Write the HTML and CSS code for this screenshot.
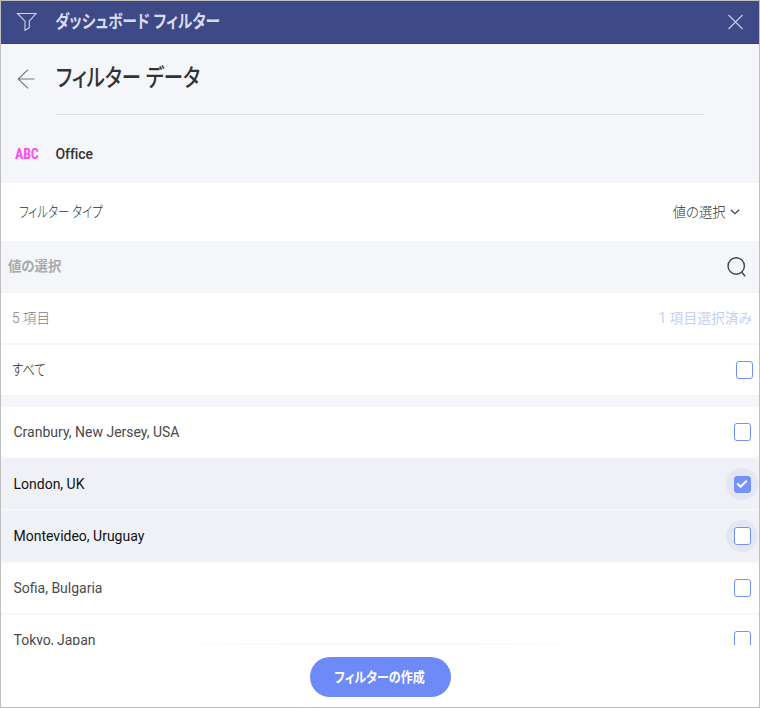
FILE: index.html
```html
<!DOCTYPE html>
<html lang="ja">
<head>
<meta charset="utf-8">
<title>ダッシュボード フィルター</title>
<link rel="stylesheet" href="styles.css">
</head>
<body>
<div class="dialog">
  <header class="titlebar">
    <svg class="funnel" width="22" height="22" viewBox="0 0 22 22"><path d="M1.5 2.5H20L13.3 10.2V16.8L9 19.3V10.2Z"/></svg>
    <span class="jp title">ダッシュボード フィルター</span>
    <svg class="close" width="16" height="16" viewBox="0 0 16 16"><path d="M1.5 1L15.5 15M15.5 1L1.5 15"/></svg>
  </header>
  <section class="intro">
    <div class="heading">
      <svg class="back" width="18" height="20" viewBox="0 0 18 20"><path d="M17.5 10H1M11 .7L1.2 10L11 19.3"/></svg>
      <h1><span class="jp h1text">フィルター データ</span></h1>
    </div>
    <div class="field"><span class="abc">ABC</span><span class="office">Office</span></div>
  </section>
  <div class="type-row">
    <span class="jp type-label">フィルター タイプ</span>
    <span class="jp type-value">値の選択</span>
    <svg class="chevron" width="10" height="6" viewBox="0 0 10 6"><path d="M.8 .8L5 4.7L9.2 .8"/></svg>
  </div>
  <div class="search-row">
    <span class="jp search-label">値の選択</span>
    <svg class="search" width="20" height="20" viewBox="0 0 20 20"><circle cx="9.2" cy="9" r="8.2"/><path d="M14.5 15L18.2 19.2"/></svg>
  </div>
  <div class="count-row">
    <span class="jp count">5 項目</span>
    <span class="jp selected">1 項目選択済み</span>
  </div>
  <div class="all-row"><span class="jp all">すべて</span><span class="box"></span></div>
  <ul class="list">
    <li><span>Cranbury, New Jersey, USA</span><span class="halo"><span class="box"></span></span></li>
    <li class="on"><span>London, UK</span><span class="halo"><span class="box checked"><svg width="12" height="10" viewBox="0 0 12 10"><path d="M1.2 4.5L4.6 7.8L10.8 1.6"/></svg></span></span></li>
    <li class="on"><span>Montevideo, Uruguay</span><span class="halo"><span class="box"></span></span></li>
    <li><span>Sofia, Bulgaria</span><span class="halo"><span class="box"></span></span></li>
    <li><span>Tokyo, Japan</span><span class="halo"><span class="box"></span></span></li>
  </ul>
  <footer><button><span class="jp create">フィルターの作成</span></button></footer>
</div>
</body>
</html>
```
FILE: styles.css
```css
* { box-sizing: border-box; }
body { margin: 0; font-family: Roboto, "Noto Sans CJK JP", sans-serif; font-size: 14px; color: #4a4a4c; }
svg { display: block; fill: none; flex: none; }
.dialog { width: 760px; height: 708px; border: 1px solid #bfbfbf; background: #f5f6fa; display: flex; flex-direction: column; overflow: hidden; }
.jp { display: inline-block; white-space: nowrap; font-feature-settings: "palt"; transform-origin: left center; }
.titlebar { height: 43px; flex: none; background: #3e4988; border-bottom: 1px solid #343e7a; display: flex; align-items: center; padding: 0 16px 0 15px; }
.funnel { stroke: #d4d6e6; stroke-width: 1.1; }
.title { margin-left: 17px; color: #d9dbe8; font-size: 18px; font-weight: 700; line-height: 40px; transform: scaleX(.818); }
.close { margin-left: auto; stroke: #c5c8dd; stroke-width: 1.2; }
.intro { height: 139px; flex: none; }
.heading { height: 71px; margin-right: 55px; display: flex; }
.back { margin: 25px 0 0 16px; stroke: #777; stroke-width: 1.1; }
h1 { margin: 0 0 0 21px; flex: 1; border-bottom: 1px solid #dcdde1; font-size: 24px; font-weight: 500; line-height: 69px; color: #333; }
.h1text { transform: scaleX(.808); }
.field { display: flex; align-items: center; height: 78px; padding-left: 14px; }
.abc { width: 40.5px; color: #ff4df0; font: 700 14px "Roboto Condensed", Roboto, sans-serif; letter-spacing: -.2px; }
.office { font-weight: 500; letter-spacing: -.1px; color: #333; }
.type-row { height: 58px; flex: none; background: #fff; display: flex; align-items: center; padding: 0 19px 0 18px; color: #303032; font-weight: 300; }
.type-label { font-size: 15px; transform: scaleX(.765); margin-top: -3px; }
.type-value { margin: -3px 0 0 auto; transform-origin: right center; transform: scaleX(.95); }
.chevron { margin-left: 5px; stroke: #444; stroke-width: 1.2; }
.search-row { height: 52px; flex: none; display: flex; align-items: center; justify-content: space-between; padding: 0 12px 0 7px; color: #a8a8aa; font-weight: 700; }
.search-label { margin-top: -4px; transform: scaleX(.955); }
.search { stroke: #444; stroke-width: 1.4; }
.count-row, .all-row { height: 50px; flex: none; background: #fff; display: flex; align-items: center; justify-content: space-between; padding: 0 7px 0 11px; }
.count-row { margin-bottom: 2px; color: #7b7b7d; font-weight: 300; }
.count-row .jp { margin-top: -3px; }
.count { transform: scaleX(.97); }
.selected { color: #c5cff9; font-weight: 400; transform-origin: right center; transform: scaleX(.985); }
.all-row { padding-right: 6px; margin-bottom: 12px; color: #222; font-weight: 300; }
.all { font-size: 15px; margin-top: -3px; transform: scaleX(.82); }
.box { width: 17px; height: 18px; border: 1px solid #7290fb; border-radius: 3px; background: #fff; }
.list { list-style: none; margin: 0; padding: 0; flex: 1; min-height: 0; overflow: hidden; display: flex; flex-direction: column; gap: 2px; }
.list li { height: 50px; flex: none; display: flex; align-items: center; justify-content: space-between; background: #fff; border-radius: 3px; padding-left: 12.5px; }
.list li.on { background: #f0f1f7; color: #111; }
.halo { width: 32px; height: 32px; margin-right: 1px; border-radius: 50%; display: flex; align-items: center; justify-content: center; }
.on .halo { background: #e2e7f3; }
.checked { height: 17px; background: #7892f7; display: flex; align-items: center; justify-content: center; }
.checked svg { stroke: #fff; stroke-width: 2; }
.list { position: relative; }
.list::after { content: ""; position: absolute; left: 130px; right: 130px; bottom: 0; height: 3px; background: radial-gradient(ellipse 50% 100% at 50% 100%, rgba(0,0,0,.05), transparent); }
footer { height: 62px; flex: none; background: #fff; display: flex; justify-content: center; padding-top: 12px; }
button { width: 141px; height: 40px; padding: 0; border: 0; border-radius: 20px; background: #6e8af8; color: #fff; font: 700 14px "Noto Sans CJK JP", sans-serif; display: flex; align-items: center; justify-content: center; }
.create { transform-origin: center; transform: scaleX(.86); margin: -2px 1px 0 0; }
```
